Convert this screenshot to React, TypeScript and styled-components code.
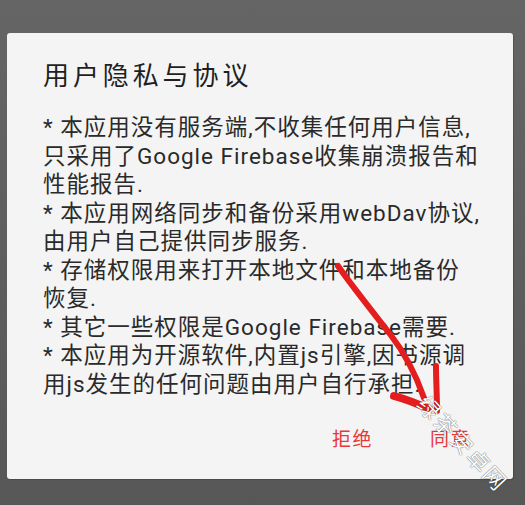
import styled, { createGlobalStyle } from 'styled-components';

const GlobalStyle = createGlobalStyle`
  html, body {
    margin: 0;
    padding: 0;
  }

  body {
    width: 525px;
    height: 505px;
    overflow: hidden;
    background: linear-gradient(180deg, #656565 0%, #575757 100%);
    font-family: Roboto, "Noto Sans CJK SC", sans-serif;
  }
`;

const Screen = styled.div`
  position: relative;
  width: 525px;
  height: 505px;
  padding: 33px 12px 0 7px;
  box-sizing: border-box;
`;

const Dialog = styled.div`
  width: 506px;
  height: 446px;
  box-sizing: border-box;
  padding: 26px 42px 0 36px;
  background: #f4f4f4;
  border-radius: 3px;
  box-shadow: 1px 1px 1px rgba(0, 0, 0, 0.18);
  display: flex;
  flex-direction: column;
`;

const Title = styled.h1`
  margin: 0;
  font-size: 26px;
  line-height: 34px;
  font-weight: 400;
  letter-spacing: 3.9px;
  color: #1f1f1f;
`;

const Body = styled.div`
  margin-top: 20px;
  font-size: 22.5px;
  line-height: 28.5px;
  letter-spacing: 1px;
  color: #2a2a2a;
  white-space: nowrap;
`;

const Line = styled.div``;

const Actions = styled.div`
  margin-top: 30px;
  display: flex;
  justify-content: flex-end;
  gap: 57px;
`;

const ActionButton = styled.button`
  border: none;
  background: none;
  padding: 0;
  font-family: inherit;
  font-size: 19px;
  line-height: 24px;
  letter-spacing: 1.5px;
  color: #e8383a;
  cursor: pointer;
`;

const Annotation = styled.svg`
  position: absolute;
  left: 0;
  top: 0;
  pointer-events: none;
`;

const Watermark = styled.div`
  position: absolute;
  left: 400px;
  top: 436px;
  width: 130px;
  font-size: 22px;
  line-height: 24px;
  letter-spacing: 2px;
  color: #fff;
  text-shadow: 0 0 1px rgba(0, 0, 0, 0.6), 0 0 1px rgba(0, 0, 0, 0.4);
  transform: rotate(47deg);
  transform-origin: center;
  pointer-events: none;
`;

const lines = [
  '* 本应用没有服务端,不收集任何用户信息,',
  '只采用了Google Firebase收集崩溃报告和',
  '性能报告.',
  '* 本应用网络同步和备份采用webDav协议,',
  '由用户自己提供同步服务.',
  '* 存储权限用来打开本地文件和本地备份',
  '恢复.',
  '* 其它一些权限是Google Firebase需要.',
  '* 本应用为开源软件,内置js引擎,因书源调',
  '用js发生的任何问题由用户自行承担.',
];

export default function App() {
  return (
    <Screen>
      <GlobalStyle />
      <Dialog>
        <Title>用户隐私与协议</Title>
        <Body>
          {lines.map((line, index) => (
            <Line key={index}>{line}</Line>
          ))}
        </Body>
        <Actions>
          <ActionButton>拒绝</ActionButton>
          <ActionButton>同意</ActionButton>
        </Actions>
      </Dialog>

      {/* hand drawn red arrow on top of the screenshot */}
      <Annotation width="525" height="505" viewBox="0 0 525 505">
        <g fill="none" stroke="#e41e1e" strokeLinecap="round" strokeLinejoin="round">
          <path d="M338 266 C352 286 372 311 390 334 C404 352 415 372 424 398" strokeWidth="6" />
          <path d="M394 396 C405 399 416 403 429 409" strokeWidth="8" />
          <path d="M436 366 C436 380 437 395 437 411" strokeWidth="6" />
        </g>
      </Annotation>
      <Watermark>绿茶安卓网</Watermark>
    </Screen>
  );
}
